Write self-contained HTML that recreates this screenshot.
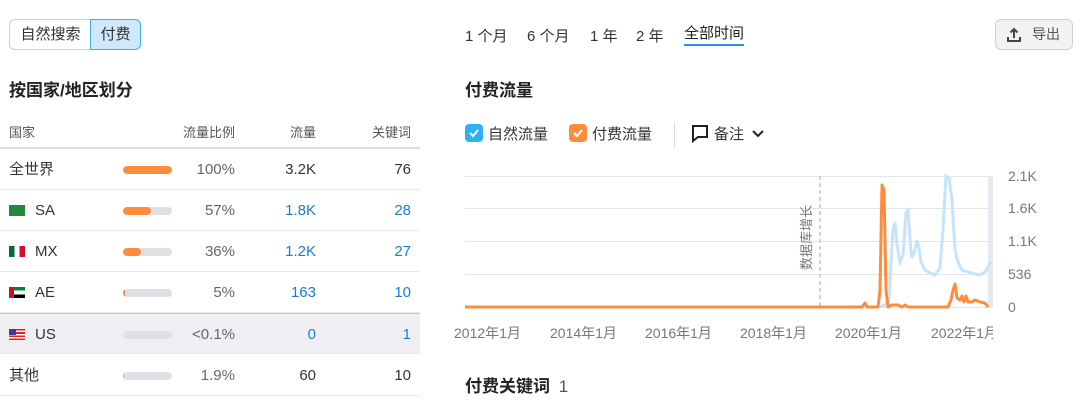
<!DOCTYPE html>
<html><head><meta charset="utf-8"><style>
*{margin:0;padding:0;box-sizing:border-box}
body{width:1080px;height:401px;background:#fff;font-family:"Liberation Sans","Noto Sans CJK SC",sans-serif;color:#333;position:relative;overflow:hidden}
.a{position:absolute;white-space:nowrap}
.tg{position:absolute;top:19px;height:31px;border:1px solid #ccd;font-size:15px;line-height:29px;text-align:center;color:#333}
.row{position:absolute;left:0;width:420px;height:41px;border-bottom:1px solid #e8e9ec;font-size:15px}
.row span{position:absolute;top:0;line-height:41px}
.bar{position:absolute;left:123px;top:17px;width:49px;height:8px;border-radius:4px;background:#dde1e5;overflow:hidden}
.bar i{display:block;height:8px;background:#ff8c3c;border-radius:4px}
.p{right:185px;color:#666}.t{right:104px}.k{right:9px}.b{color:#1a7bd6}
.fl{position:absolute;left:9px;top:15px;width:16px;height:11px}
</style></head><body>
<div class="tg" style="left:9px;width:82px;border-radius:6px 0 0 6px;border-right:none">自然搜索</div>
<div class="tg" style="left:90px;width:51px;border-radius:0 6px 6px 0;background:#cfe8fc;border-color:#45a8f0">付费</div>
<div class="a" style="left:9px;top:76px;font-size:17px;font-weight:bold;color:#222">按国家/地区划分</div>
<div class="a" style="left:9px;top:122px;font-size:13px;color:#555">国家</div>
<div class="a" style="right:845px;top:122px;font-size:13px;color:#555">流量比例</div>
<div class="a" style="right:764px;top:122px;font-size:13px;color:#555">流量</div>
<div class="a" style="right:669px;top:122px;font-size:13px;color:#555">关键词</div>
<div class="a" style="left:0;top:147px;width:420px;height:2px;background:#dcdde1"></div>
<div class="row" style="top:149px"><span style="left:9px">全世界</span><div class="bar"><i style="width:100%"></i></div><span class="p">100%</span><span class="t">3.2K</span><span class="k">76</span></div>
<div class="row" style="top:190px"><div class="fl" style="background:#1e8a3a"></div><span style="left:35px">SA</span><div class="bar"><i style="width:57%"></i></div><span class="p">57%</span><span class="t b">1.8K</span><span class="k b">28</span></div>
<div class="row" style="top:231px"><div class="fl" style="background:linear-gradient(90deg,#0a6b3a 33%,#fff 33% 66%,#ce1126 66%)"></div><span style="left:35px">MX</span><div class="bar"><i style="width:36%"></i></div><span class="p">36%</span><span class="t b">1.2K</span><span class="k b">27</span></div>
<div class="row" style="top:272px"><div class="fl" style="background:linear-gradient(90deg,#c8102e 30%,transparent 30%),linear-gradient(#00843d 33%,#fff 33% 66%,#000 66%)"></div><span style="left:35px">AE</span><div class="bar"><i style="width:5%"></i></div><span class="p">5%</span><span class="t b">163</span><span class="k b">10</span></div>
<div class="row" style="top:313px;background:#efeff3;border-top:1px solid #c9cbd1"><div class="fl" style="background:linear-gradient(90deg,#3c3b8e 45%,transparent 45%) 0 0/16px 6px no-repeat,repeating-linear-gradient(#d22 0 1.6px,#fff 1.6px 3.2px)"></div><span style="left:35px">US</span><div class="bar"></div><span class="p">&lt;0.1%</span><span class="t b">0</span><span class="k b">1</span></div>
<div class="row" style="top:355px"><span style="left:9px">其他</span><div class="bar"><i style="width:2%"></i></div><span class="p">1.9%</span><span class="t">60</span><span class="k">10</span></div>

<div class="a" style="left:465px;top:25px;font-size:15px;color:#333">1 个月</div>
<div class="a" style="left:527px;top:25px;font-size:15px;color:#333">6 个月</div>
<div class="a" style="left:590px;top:25px;font-size:15px;color:#333">1 年</div>
<div class="a" style="left:636px;top:25px;font-size:15px;color:#333">2 年</div>
<div class="a" style="left:684px;top:25px;font-size:15px;color:#222;border-bottom:2px solid #2a8de6;line-height:18px;padding-bottom:1px">全部时间</div>
<div class="a" style="left:995px;top:19px;width:78px;height:31px;border:1px solid #cfd1d6;border-radius:6px;background:#f1f2f4;font-size:14px;color:#555;line-height:29px;padding-left:36px">导出
<svg style="position:absolute;left:10px;top:7px" width="16" height="16" viewBox="0 0 16 16"><path d="M8 11V2M4.5 5.5L8 2l3.5 3.5M2 10v4h12v-4" stroke="#444" stroke-width="2" fill="none"/></svg></div>

<div class="a" style="left:465px;top:76px;font-size:17px;font-weight:bold;color:#222">付费流量</div>
<div class="a" style="left:465px;top:124px;width:18px;height:18px;border-radius:4px;background:#2fb0f5"><svg width="18" height="18"><path d="M5 9l3 3 5-6" stroke="#fff" stroke-width="2" fill="none"/></svg></div>
<div class="a" style="left:488px;top:123px;font-size:15px">自然流量</div>
<div class="a" style="left:569px;top:124px;width:18px;height:18px;border-radius:4px;background:#ff8c3c"><svg width="18" height="18"><path d="M5 9l3 3 5-6" stroke="#fff" stroke-width="2" fill="none"/></svg></div>
<div class="a" style="left:592px;top:123px;font-size:15px">付费流量</div>
<div class="a" style="left:674px;top:122px;width:1px;height:26px;background:#ddd"></div>
<svg class="a" style="left:691px;top:124px" width="18" height="19"><path d="M2 2h14v11H7l-5 4z" stroke="#222" stroke-width="2" fill="none"/></svg>
<div class="a" style="left:714px;top:123px;font-size:15px">备注</div>
<svg class="a" style="left:752px;top:129px" width="12" height="10"><path d="M1 2l5 5 5-5" stroke="#222" stroke-width="2" fill="none"/></svg>

<svg class="a" style="left:0;top:0" width="1080" height="401">
<g stroke="#e3e5ec" stroke-width="1">
<line x1="465" y1="176.5" x2="993" y2="176.5"/><line x1="465" y1="208.5" x2="993" y2="208.5"/><line x1="465" y1="241.5" x2="993" y2="241.5"/><line x1="465" y1="274.5" x2="993" y2="274.5"/><line x1="465" y1="307.5" x2="993" y2="307.5"/></g>
<rect x="988" y="176" width="5" height="131" fill="#e5e8ec"/>
<line x1="820" y1="176" x2="820" y2="307" stroke="#aaa" stroke-dasharray="4 3"/>
<text transform="translate(811,270) rotate(-90)" font-size="13" fill="#777" font-family="Liberation Sans,Noto Sans CJK SC,sans-serif">数据库增长</text>
<path d="M880 307L885 305 889 300 891 262 893 230 895 222 897 245 900 262 903 255 906 212 908 210 910 240 912 258 915 250 917 240 919 248 921 262 925 270 930 273 935 275 940 268 943 230 946 176 949 178 952 200 955 250 958 262 962 270 968 272 975 274 980 275 985 272 991 262" stroke="#c5e4fa" stroke-width="3" fill="none"/>
<path d="M465 307H862L865 303 867 307 878 307 880 290 882 185 884 190 886 290 888 307 892 305 898 305 902 307 905 305 908 307 948 307 951 300 953 290 955 284 957 298 960 300 962 296 964 302 966 296 968 302 972 302 975 300 980 302 985 303 988 307" stroke="#ff8c3c" stroke-width="3" fill="none" stroke-linejoin="round"/>
<g font-size="14" fill="#777" font-family="Liberation Sans,Noto Sans CJK SC,sans-serif">
<text x="1008" y="181">2.1K</text><text x="1008" y="213">1.6K</text><text x="1008" y="246">1.1K</text><text x="1008" y="279">536</text><text x="1008" y="312">0</text>
<text x="454" y="338">2012年1月</text><text x="550" y="338">2014年1月</text><text x="645" y="338">2016年1月</text><text x="740" y="338">2018年1月</text><text x="835" y="338">2020年1月</text><text x="931" y="338">2022年1月</text></g>
<rect x="993" y="320" width="20" height="25" fill="#fff"/>
</svg>
<div class="a" style="left:465px;top:372px;font-size:17px;font-weight:bold;color:#222">付费关键词 <span style="font-weight:normal;color:#555;margin-left:4px">1</span></div>
</body></html>
